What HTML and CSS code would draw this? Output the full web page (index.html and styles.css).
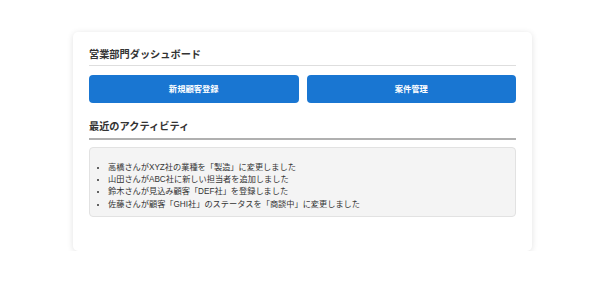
FILE: index.html
```html
<!DOCTYPE html>
<html lang="ja">

<head>
    <meta charset="UTF-8">
    <title>営業部門ダッシュボード</title>
    <link rel="stylesheet" href="styles.css">
</head>

<body>
    <div class="dashboard">
        <h1 class="title">営業部門ダッシュボード</h1>
        <div class="actions">
            <a href="#" class="btn">新規顧客登録</a>
            <a href="#" class="btn">案件管理</a>
        </div>
        <h2 class="section-title">最近のアクティビティ</h2>
        <div class="activity">
            <ul>
                <li>高橋さんがXYZ社の業種を「製造」に変更しました</li>
                <li>山田さんがABC社に新しい担当者を追加しました</li>
                <li>鈴木さんが見込み顧客「DEF社」を登録しました</li>
                <li>佐藤さんが顧客「GHI社」のステータスを「商談中」に変更しました</li>
            </ul>
        </div>
    </div>
</body>

</html>
```

FILE: styles.css
```css
body {
    margin: 0;
    padding-top: 32px;
    background-color: #fff;
    font-family: "Liberation Sans", "Noto Sans CJK JP", sans-serif;
    color: #333;
}

.dashboard {
    width: 427px;
    margin: 0 auto;
    padding: 16px 16px 16px 16px;
    background-color: #fff;
    border-radius: 5px;
    box-shadow: 0 1px 6px rgba(0, 0, 0, 0.12);
}

.title {
    margin: 0 0 9px 0;
    padding-bottom: 3px;
    font-size: 10.2px;
    line-height: 14px;
    font-weight: bold;
    border-bottom: 1px solid #dedede;
}

.actions {
    display: flex;
    gap: 8px;
}

.btn {
    flex: 1;
    height: 28px;
    line-height: 28px;
    text-align: center;
    background-color: #1976d2;
    color: #fff;
    font-size: 8.3px;
    font-weight: bold;
    text-decoration: none;
    border-radius: 4px;
}

.section-title {
    margin: 17px 0 7px 0;
    padding-bottom: 4px;
    font-size: 10.2px;
    line-height: 14px;
    font-weight: bold;
    border-bottom: 2px solid #b0b0b0;
}

.activity {
    margin-bottom: 18px;
    padding: 14px 10px 5px 10px;
    background-color: #f4f4f4;
    border: 1px solid #e2e2e2;
    border-radius: 4px;
}

.activity ul {
    margin: 0;
    padding-left: 8px;
}

.activity li {
    font-size: 8.2px;
    line-height: 12.2px;
}
```
